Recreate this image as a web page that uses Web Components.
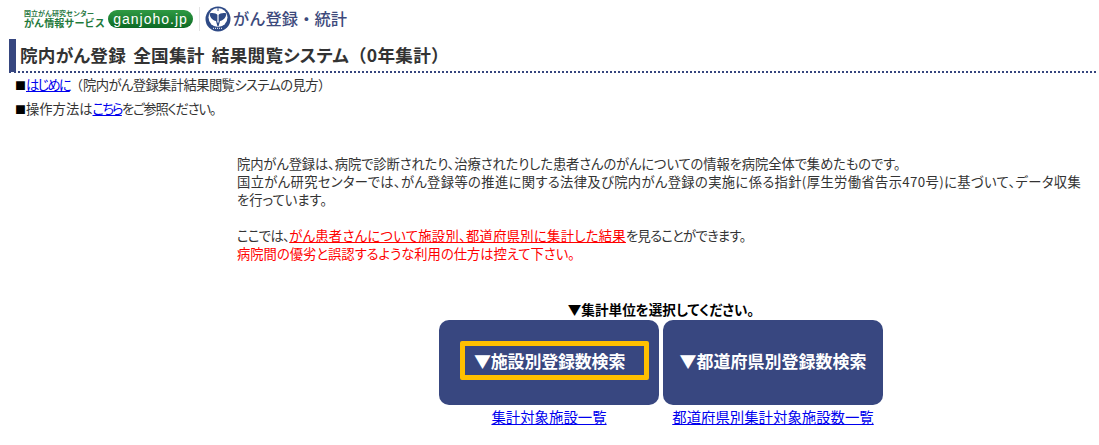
<!DOCTYPE html>
<html lang="ja">
<head>
<meta charset="utf-8">
<style>
    html, body { margin: 0; background: #fff; }
    body { font-family: "Noto Sans CJK JP", "Liberation Sans", sans-serif; font-size: 14px; color: #333; overflow: hidden; font-feature-settings: "palt"; }
    .fw { font-feature-settings: normal; }
</style>
</head>
<body>
<site-header></site-header>
<page-title>院内がん登録 全国集計 結果閲覧システム<span class="fw">（</span>0年集計<span class="fw">）</span></page-title>
<note-list></note-list>
<intro-text></intro-text>
<search-panel></search-panel>

<script>
class SiteHeader extends HTMLElement {
    constructor() {
        super()
        this.attachShadow({ mode: 'open' }).innerHTML = `<style>
            :host { display: flex; align-items: center; height: 39px; padding-left: 24px; box-sizing: border-box; padding-bottom: 2px; }
            .org { display: grid; color: #1f7a3c; line-height: 1; width: 81px; white-space: nowrap; font-feature-settings: normal; }
            .org small { font-size: 7px; font-weight: 700; color: #2c7a45; line-height: 8px; }
            .org b { font-size: 10.100px; font-weight: 700; line-height: 11px; }
            .pill { margin-left: 3px; width: 85px; height: 18px; border-radius: 9px; color: #fff; font: 400 14px/18px "Liberation Sans", sans-serif; letter-spacing: 1px; text-align: center; background: linear-gradient(#2f9a43, #0d6a25); }
            .sep { width: 1px; height: 24px; background: #e4e4e4; margin: 0 5px 0 6px; }
            svg { display: block; flex: none; }
            .name { margin-left: 2px; color: #3d4a7c; font-size: 16.300px; font-weight: 500; white-space: nowrap; line-height: 1; font-feature-settings: normal; }
        </style>
        <div class="org"><small>国立がん研究センター</small><b>がん情報サービス</b></div>
        <div class="pill">ganjoho.jp</div>
        <div class="sep"></div>
        <svg width="26" height="26" viewBox="0 0 26 26">
            <circle cx="13" cy="13" r="12.500" fill="#2e4a86"/>
            <circle cx="13" cy="11.500" r="9.500" fill="#fff"/>
            <path d="M4.500 7.500C8 6.500 11 7.500 13 9c2-1.500 5-2.500 8.500-1.500C21 12 18 14.500 15 15l-1.500 5.500h-1L11 15C8 14.500 5 12 4.500 7.500z" fill="#2e4a86"/>
            <path d="M12.400 3.500h1.200v13h-1.200z" fill="#fff"/>
            <path d="M12.500 2h1v3h-1z" fill="#2e4a86"/>
            <path d="M8 22.300h10" stroke="#fff" stroke-width="1" stroke-dasharray="1 1"/>
        </svg>
        <div class="name">がん登録・統計</div>`
    }
}

class PageTitle extends HTMLElement {
    constructor() {
        super()
        this.attachShadow({ mode: 'open' }).innerHTML = `<style>
            :host { display: block; margin: 0 3px 0 9px; height: 34px; box-sizing: border-box; border-left: 7px solid #36467f; border-bottom: 2px dotted #36467f; padding-left: 4px; font-size: 17.600px; font-weight: 700; line-height: 31px; color: #333; white-space: nowrap; word-spacing: 3px; letter-spacing: .25px; }
        </style><slot></slot>`
    }
}

class NoteList extends HTMLElement {
    constructor() {
        super()
        this.attachShadow({ mode: 'open' }).innerHTML = `<style>
            :host { display: grid; row-gap: 4px; padding: 2px 0 0 15px; font-size: 13.300px; line-height: 20px; color: #333; }
            a { color: #00e; }
            .sq { color: #000; font-size: 11px; }
            .fw { font-feature-settings: normal; }
            .rest { letter-spacing: -.6px; }
            .kana { letter-spacing: -1.2px; }
            .tight { letter-spacing: -1.8px; }
        </style>
        <div><span class="sq">■</span><a class="tight" href="#">はじめに</a><span class="fw">（</span><span class="rest">院内がん登録集計結果閲覧システムの見方</span><span class="fw">）</span></div>
        <div><span class="sq">■</span>操作方法は<a class="tight" href="#">こちら</a><span class="kana">をご参照ください。</span></div>`
    }
}

class IntroText extends HTMLElement {
    constructor() {
        super()
        this.attachShadow({ mode: 'open' }).innerHTML = `<style>
            :host { display: block; margin: 36px 14px 0 237px; font-size: 13.300px; line-height: 18px; color: #333; }
            p { margin: 0 0 18px; }
            .red, a { color: #f00; }
            .l1 { letter-spacing: -.1px; }
            .l2 { letter-spacing: .36px; }
            .lead { letter-spacing: -.6px; }
            a { letter-spacing: .3px; }
            .tail { letter-spacing: -.7px; }
        </style>
        <p><span class="l1">院内がん登録は、病院で診断されたり、治療されたりした患者さんのがんについての情報を病院全体で集めたものです。</span><br><span class="l2">国立がん研究センターでは、がん登録等の推進に関する法律及び院内がん登録の実施に係る指針(厚生労働省告示470号)に基づいて、データ収集</span><br>を行っています。</p>
        <p><span class="lead">ここでは、</span><a href="#">がん患者さんについて施設別、都道府県別に集計した結果</a><span class="tail">を見ることができます。</span><br><span class="red">病院間の優劣と誤認するような利用の仕方は控えて下さい。</span></p>`
    }
}

class SearchPanel extends HTMLElement {
    constructor() {
        super()
        this.attachShadow({ mode: 'open' }).innerHTML = `<style>
            :host { display: grid; grid-template-columns: 220px 220px; column-gap: 4px; justify-content: start; margin: 35px 0 0 439px; text-align: center; }
            .lead { grid-column: 1 / -1; font-size: 13.600px; font-weight: 700; line-height: 22px; color: #000; }
            .btn { height: 85px; padding-bottom: 4px; border-radius: 10px; background: #384780; color: #fff; font-size: 17px; font-weight: 700; display: flex; align-items: center; justify-content: center; box-sizing: border-box; }
            .btn span { display: block; box-sizing: border-box; white-space: nowrap; }
            .focus span { width: 189px; height: 39px; margin-left: 11px; padding-left: 9px; text-align: left; line-height: 29px; border: 5px solid #ffc000; border-radius: 2px; letter-spacing: -.2px; }
            a { color: #00e; font-size: 14.400px; line-height: 23px; white-space: nowrap; }
        </style>
        <div class="lead">▼集計単位を選択してください。</div>
        <div class="btn focus"><span>▼施設別登録数検索</span></div>
        <div class="btn"><span>▼都道府県別登録数検索</span></div>
        <div><a href="#">集計対象施設一覧</a></div>
        <div><a href="#">都道府県別集計対象施設数一覧</a></div>`
    }
}

customElements.define("site-header", SiteHeader)
customElements.define("page-title", PageTitle)
customElements.define("note-list", NoteList)
customElements.define("intro-text", IntroText)
customElements.define("search-panel", SearchPanel)
</script>
</body>
</html>
